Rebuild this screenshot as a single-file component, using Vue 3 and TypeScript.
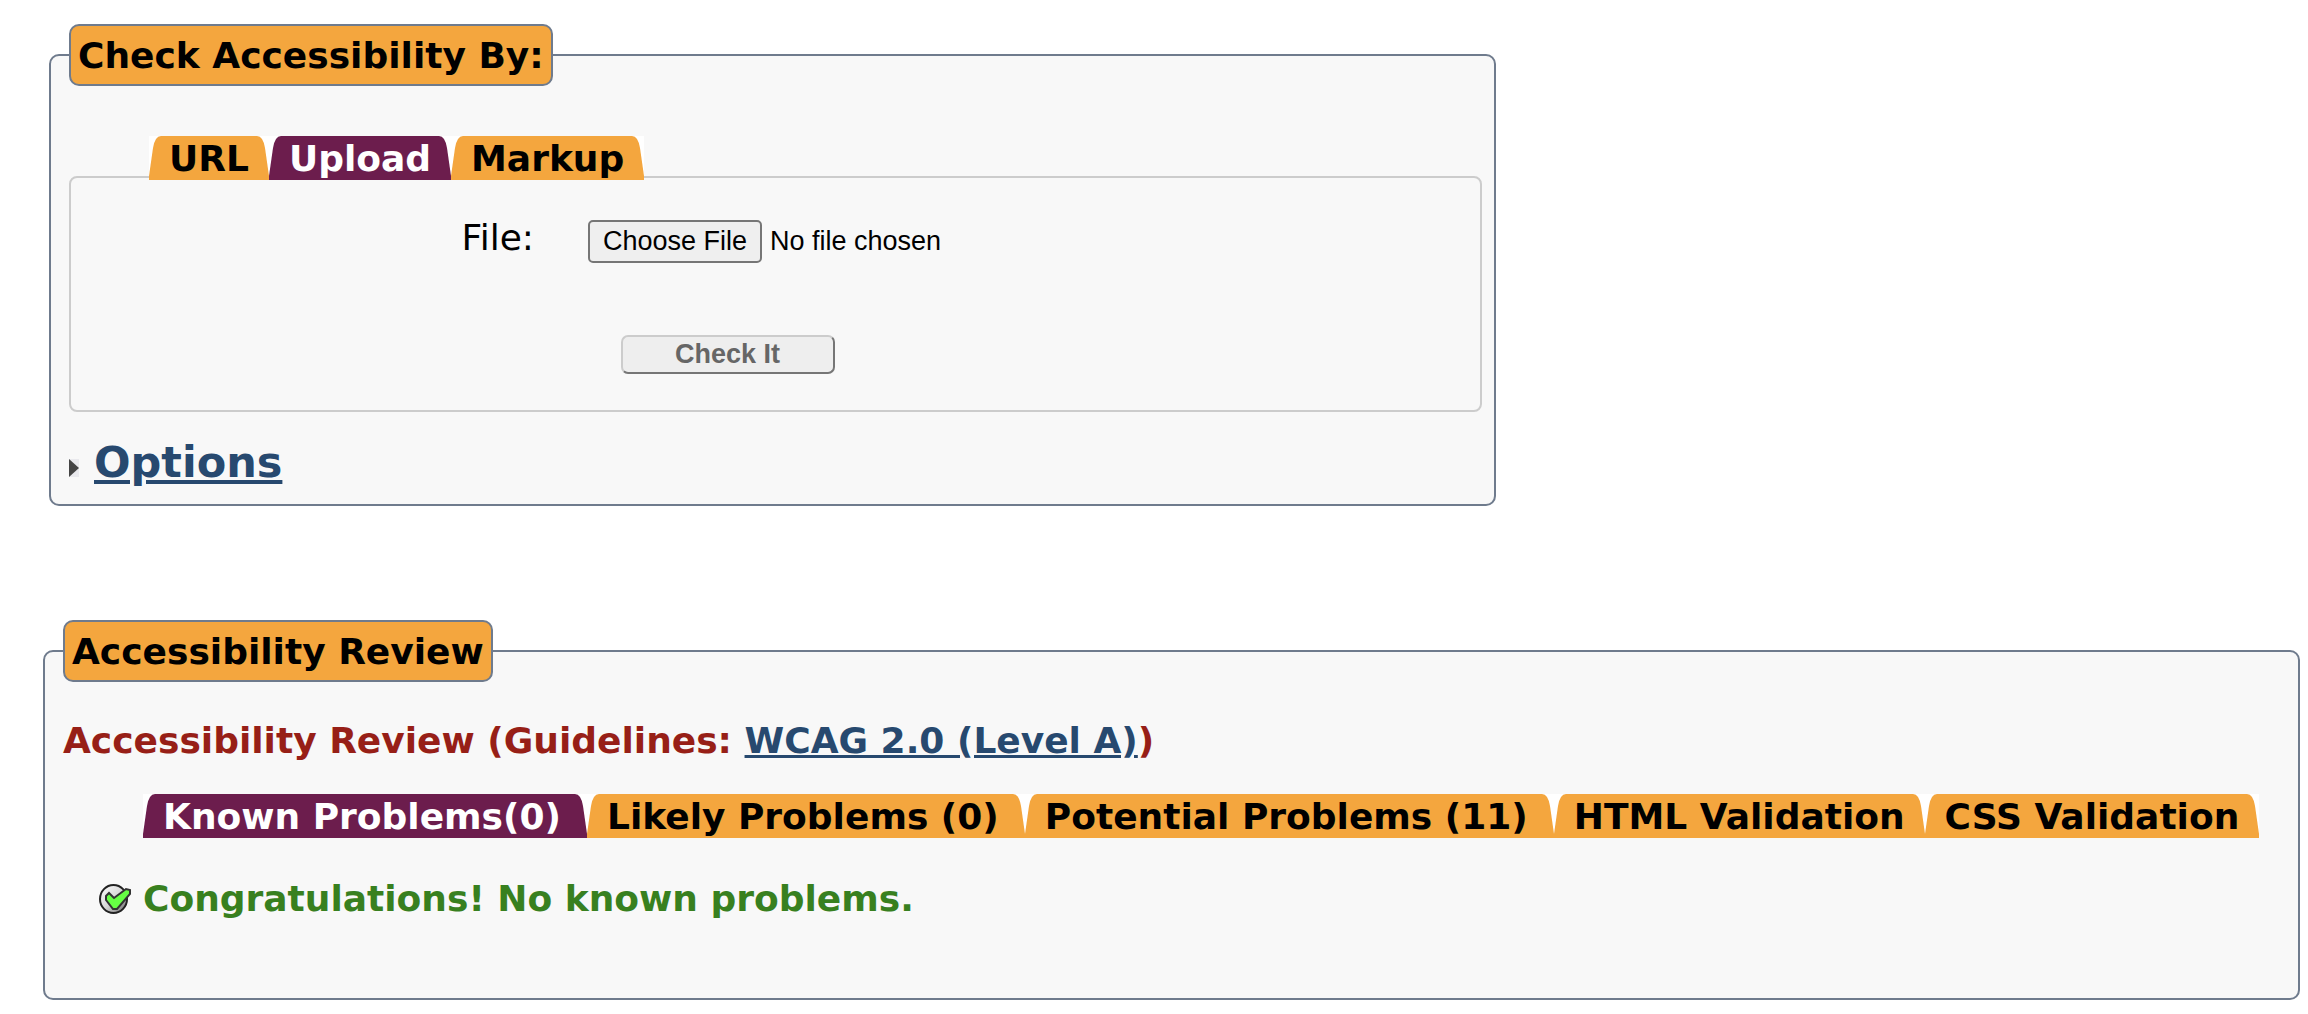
<script setup lang="ts">
import { ref } from 'vue'

interface Tab {
  id: string
  label: string
  counted?: boolean
}

const inputTabs: Tab[] = [
  { id: 'url', label: 'URL' },
  { id: 'upload', label: 'Upload' },
  { id: 'markup', label: 'Markup' },
]

const reviewTabs: Tab[] = [
  { id: 'known', label: 'Known Problems(0)', counted: true },
  { id: 'likely', label: 'Likely Problems (0)', counted: true },
  { id: 'potential', label: 'Potential Problems (11)', counted: true },
  { id: 'html', label: 'HTML Validation' },
  { id: 'css', label: 'CSS Validation' },
]

const activeInput = ref('upload')
const activeReview = ref('known')
</script>

<template>
  <main class="page">
    <form class="checker" @submit.prevent>
      <fieldset class="group">
        <legend class="legend">Check Accessibility By:</legend>
        <ul class="tabs tabs-input">
          <li v-for="tab in inputTabs" :key="tab.id">
            <a
              :href="'#' + tab.id"
              class="tab"
              :class="{ active: activeInput === tab.id }"
              @click.prevent="activeInput = tab.id"
            >
              <svg class="edge" viewBox="0 0 14 44" aria-hidden="true"><path d="M0 44 V40 L4 12 Q6 0 12 0 H14 V44Z" /></svg>
              <span class="tab-text">{{ tab.label }}</span>
              <svg class="edge" viewBox="0 0 14 44" aria-hidden="true"><path d="M14 44 V40 L10 12 Q8 0 2 0 H0 V44Z" /></svg>
            </a>
          </li>
        </ul>
        <div class="panel">
          <div class="file-row">
            <label for="upload-file">File:</label>
            <input id="upload-file" class="file" type="file" />
          </div>
          <button class="submit" type="submit" disabled>Check It</button>
        </div>
        <h2 class="options">
          <svg class="arrow" viewBox="0 0 10 18" aria-hidden="true">
            <rect width="10" height="18" fill="#e9e9ed" />
            <path d="M0 0 L10 9 L0 18Z" fill="#444" />
          </svg>
          <a href="#options">Options</a>
        </h2>
      </fieldset>
    </form>

    <fieldset class="group review">
      <legend class="legend">Accessibility Review</legend>
      <h3 class="heading">
        Accessibility Review (Guidelines: <a href="#wcag2-a">WCAG 2.0 (Level A)</a>)
      </h3>
      <ul class="tabs tabs-review">
        <li v-for="tab in reviewTabs" :key="tab.id">
          <a
            :href="'#' + tab.id"
            class="tab"
            :class="{ active: activeReview === tab.id, counted: tab.counted }"
            @click.prevent="activeReview = tab.id"
          >
            <svg class="edge" viewBox="0 0 14 44" aria-hidden="true"><path d="M0 44 V40 L4 12 Q6 0 12 0 H14 V44Z" /></svg>
            <span class="tab-text">{{ tab.label }}</span>
            <svg class="edge" viewBox="0 0 14 44" aria-hidden="true"><path d="M14 44 V40 L10 12 Q8 0 2 0 H0 V44Z" /></svg>
          </a>
        </li>
      </ul>
      <p class="result">
        <svg class="ok" viewBox="0 0 32 30" aria-hidden="true">
          <defs>
            <linearGradient id="ball" x1="0" y1="0" x2="1" y2="1">
              <stop offset="0" stop-color="#fff" />
              <stop offset="0.5" stop-color="#d8d8d8" />
              <stop offset="1" stop-color="#666" />
            </linearGradient>
          </defs>
          <ellipse cx="14.5" cy="15" rx="13.5" ry="14" fill="url(#ball)" stroke="#222" stroke-width="2" />
          <path d="M7 12 L10 9 L15 14 L27 5 L31 6 L31 10 L18 25 L14 25 L7 16Z" fill="#6f4" stroke="#333" stroke-width="2" />
        </svg>
        <span>Congratulations! No known problems.</span>
      </p>
    </fieldset>
  </main>
</template>

<style>
body {
  background: #fff;
}
</style>

<style scoped>
.page {
  padding: 24px 8px 14px 43px;
  font-family: Verdana, "DejaVu Sans", sans-serif;
  font-size: 36px;
  color: #000;
}

.checker {
  display: grid;
  grid-template-columns: 9fr 5fr;
  margin: 0 0 114px 6px;
}

.group {
  min-width: 0;
  margin: 0;
  padding: 0 12px 0 18px;
  border: 2px solid #6f7b8d;
  border-radius: 10px;
  background: #f8f8f8;
}

.legend {
  box-sizing: border-box;
  padding: 2px 7px 0;
  border: 2px solid #6f7b8d;
  border-radius: 10px;
  background: #f4a63e;
  font-weight: bold;
  line-height: 56px;
  white-space: nowrap;
}

.tabs {
  display: flex;
  margin: 0;
  list-style: none;
}

.tabs-input {
  position: relative;
  margin: 50px 0 -4px;
  padding: 0 0 0 80px;
}

.tabs-review {
  padding: 0 0 0 80px;
}

.tab {
  display: flex;
  height: 44px;
  background: #fff;
  color: #000;
  fill: #f4a63e;
  font-weight: bold;
  text-decoration: none;
  white-space: nowrap;
}

.tab-text {
  padding: 2px 6px 0;
  background: #f4a63e;
  line-height: 42px;
}

.tab.counted .tab-text {
  padding-right: 12px;
}

.edge {
  flex: none;
  width: 14px;
  height: 44px;
}

.tab.active {
  color: #fff;
  fill: #6c1d4d;
}

.tab.active .tab-text {
  background: #6c1d4d;
}

.panel {
  padding: 38px 0 36px;
  border: 2px solid #ccc;
  border-radius: 8px;
}

.file-row {
  display: grid;
  grid-template-columns: 33% 1fr;
  column-gap: 52px;
  align-items: start;
}

.file-row label {
  padding-right: 2px;
  line-height: 44px;
  text-align: right;
}

.file {
  margin: 4px 0 0;
  font: 27px "Liberation Sans", Arial, sans-serif;
  color: #000;
}

.file::file-selector-button {
  box-sizing: border-box;
  width: 174px;
  height: 43px;
  margin: 0 8px 0 0;
  padding: 0;
  border: 2px solid #767676;
  border-radius: 5px;
  background: #efefef;
  font: inherit;
  color: #000;
}

.submit {
  display: block;
  box-sizing: border-box;
  width: 214px;
  height: 39px;
  margin: 72px 0 0 39%;
  padding: 0;
  border: 2px solid;
  border-color: #ccc #767676 #767676 #ccc;
  border-radius: 7px;
  background: #eee;
  font: bold 27px "Liberation Sans", Arial, sans-serif;
  color: #666;
}

.options {
  display: flex;
  align-items: center;
  gap: 15px;
  margin: 0;
  padding: 24px 0 16px;
  font-size: 43px;
  line-height: 52px;
}

.options a,
.heading a {
  color: #27496f;
}

.arrow {
  width: 10px;
  height: 18px;
  margin-top: 12px;
}

.heading {
  margin: 36px 0 30px;
  font-size: 36px;
  line-height: 46px;
  color: #971f17;
}

.result {
  display: flex;
  align-items: center;
  gap: 12px;
  margin: 0;
  padding: 38px 36px 76px;
  font-weight: bold;
  line-height: 46px;
  color: #38801f;
}

.ok {
  width: 32px;
  height: 30px;
}
</style>
